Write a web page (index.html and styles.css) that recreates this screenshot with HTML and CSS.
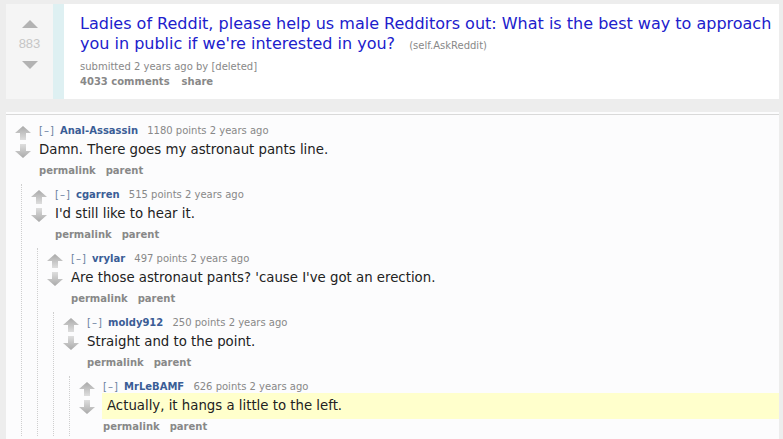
FILE: index.html
```html
<!DOCTYPE html>
<html>

<head>
    <title>AskReddit</title>
    <link rel="stylesheet" href="styles.css">
</head>

<body>
    <div class="link">
        <div class="midcol">
            <div class="arrow up"></div>
            <div class="score">883</div>
            <div class="arrow down"></div>
        </div>
        <div class="thumb"></div>
        <div class="entry">
            <p class="title">
                <a href="#">Ladies of Reddit, please help us male Redditors out: What is the best way to approach you in public if we're interested in you?</a>
                <span class="domain">(self.AskReddit)</span>
            </p>
            <p class="tagline">submitted 2 years ago by [deleted]</p>
            <ul class="flat-list">
                <li>4033 comments</li>
                <li>share</li>
            </ul>
        </div>
    </div>

    <div class="commentarea">
        <div class="sitetable">
            <div class="comment">
                <div class="voters">
                    <svg class="vote" viewBox="0 0 16 14"><use href="#upmod" /></svg>
                    <svg class="vote" viewBox="0 0 16 14"><use href="#downmod" /></svg>
                </div>
                <div class="entry">
                    <p class="tagline"><span class="expand">[&ndash;]</span> <span class="author">Anal-Assassin</span> <span class="points">1180 points 2 years ago</span></p>
                    <div class="md">Damn. There goes my astronaut pants line.</div>
                    <ul class="flat-list"><li>permalink</li><li>parent</li></ul>
                </div>
                <div class="child">
                    <div class="comment">
                        <div class="voters">
                            <svg class="vote" viewBox="0 0 16 14"><use href="#upmod" /></svg>
                            <svg class="vote" viewBox="0 0 16 14"><use href="#downmod" /></svg>
                        </div>
                        <div class="entry">
                            <p class="tagline"><span class="expand">[&ndash;]</span> <span class="author">cgarren</span> <span class="points">515 points 2 years ago</span></p>
                            <div class="md">I'd still like to hear it.</div>
                            <ul class="flat-list"><li>permalink</li><li>parent</li></ul>
                        </div>
                        <div class="child">
                            <div class="comment">
                                <div class="voters">
                                    <svg class="vote" viewBox="0 0 16 14"><use href="#upmod" /></svg>
                                    <svg class="vote" viewBox="0 0 16 14"><use href="#downmod" /></svg>
                                </div>
                                <div class="entry">
                                    <p class="tagline"><span class="expand">[&ndash;]</span> <span class="author">vrylar</span> <span class="points">497 points 2 years ago</span></p>
                                    <div class="md">Are those astronaut pants? 'cause I've got an erection.</div>
                                    <ul class="flat-list"><li>permalink</li><li>parent</li></ul>
                                </div>
                                <div class="child">
                                    <div class="comment">
                                        <div class="voters">
                                            <svg class="vote" viewBox="0 0 16 14"><use href="#upmod" /></svg>
                                            <svg class="vote" viewBox="0 0 16 14"><use href="#downmod" /></svg>
                                        </div>
                                        <div class="entry">
                                            <p class="tagline"><span class="expand">[&ndash;]</span> <span class="author">moldy912</span> <span class="points">250 points 2 years ago</span></p>
                                            <div class="md">Straight and to the point.</div>
                                            <ul class="flat-list"><li>permalink</li><li>parent</li></ul>
                                        </div>
                                        <div class="child">
                                            <div class="comment">
                                                <div class="voters">
                                                    <svg class="vote" viewBox="0 0 16 14"><use href="#upmod" /></svg>
                                                    <svg class="vote" viewBox="0 0 16 14"><use href="#downmod" /></svg>
                                                </div>
                                                <div class="entry">
                                                    <p class="tagline"><span class="expand">[&ndash;]</span> <span class="author">MrLeBAMF</span> <span class="points">626 points 2 years ago</span></p>
                                                    <div class="md highlight">Actually, it hangs a little to the left.</div>
                                                    <ul class="flat-list"><li>permalink</li><li>parent</li></ul>
                                                </div>
                                            </div>
                                        </div>
                                    </div>
                                </div>
                            </div>
                        </div>
                    </div>
                </div>
            </div>
        </div>
    </div>

    <svg class="defs" width="0" height="0">
        <defs>
            <linearGradient id="gup" x1="0" y1="0" x2="0" y2="1">
                <stop offset="0" stop-color="#a9a9a9" />
                <stop offset="1" stop-color="#dedede" />
            </linearGradient>
            <linearGradient id="gdown" x1="0" y1="0" x2="0" y2="1">
                <stop offset="0" stop-color="#dedede" />
                <stop offset="1" stop-color="#a9a9a9" />
            </linearGradient>
            <symbol id="upmod" viewBox="0 0 16 14">
                <polygon points="8,0 16,7 11,7 11,14 5,14 5,7 0,7" fill="url(#gup)" />
            </symbol>
            <symbol id="downmod" viewBox="0 0 16 14">
                <polygon points="5,0 11,0 11,7 16,7 8,14 0,7 5,7" fill="url(#gdown)" />
            </symbol>
        </defs>
    </svg>
</body>

</html>
```

FILE: styles.css
```css
body {
    margin: 0;
    background-color: #ededed;
    font-family: "DejaVu Sans", Verdana, sans-serif;
    color: #222;
    overflow: hidden;
}

p, ul {
    margin: 0;
    padding: 0;
}

.flat-list {
    list-style: none;
    display: flex;
    gap: 10px;
    font-size: 10px;
    line-height: 12px;
    font-weight: bold;
    color: #888;
}

/* post header */

.link {
    display: flex;
    margin: 4px 4px 0 6px;
    height: 95px;
    background-color: #fff;
}

.link .midcol {
    width: 47px;
    background-color: #f5f5f5;
    display: flex;
    flex-direction: column;
    align-items: center;
    padding-top: 16px;
    box-sizing: border-box;
}

.arrow {
    width: 0;
    height: 0;
    border-left: 8px solid transparent;
    border-right: 8px solid transparent;
}

.arrow.up {
    border-bottom: 8px solid #b3b3b3;
}

.arrow.down {
    border-top: 8px solid #b3b3b3;
}

.score {
    font-family: "Liberation Sans", Arial, sans-serif;
    font-size: 13px;
    line-height: 16px;
    color: #c6c6c6;
    margin: 8px 0 9px;
}

.thumb {
    width: 11px;
    background-color: #def0f2;
}

.link .entry {
    flex: 1;
    padding: 10px 0 0 16px;
}

.title {
    font-size: 16px;
    line-height: 20px;
}

.title a {
    color: #2020cc;
    text-decoration: none;
}

.domain {
    display: inline-block;
    font-size: 10px;
    line-height: 12px;
    color: #888;
    margin-left: 9px;
}

.link .tagline {
    font-size: 10px;
    line-height: 12px;
    color: #888;
    margin: 7px 0 3px;
}

.link .flat-list {
    gap: 12px;
}

/* comments */

.commentarea {
    margin: 13px 4px 0 6px;
    padding-top: 2px;
    background-color: #fcfcfd;
    height: 326px;
}

.sitetable {
    border-top: 1px solid #d9d9d9;
    padding: 5px 0 0 9px;
}

.comment {
    display: grid;
    grid-template-columns: 16px 1fr;
    column-gap: 8px;
    padding-top: 5px;
}

.voters {
    display: flex;
    flex-direction: column;
    gap: 4px;
    padding-top: 1px;
}

.vote {
    width: 16px;
    height: 14px;
}

.comment .tagline {
    font-size: 10px;
    line-height: 12px;
    color: #888;
}

.expand {
    color: #6a7fa0;
    letter-spacing: 1px;
    margin-right: 2px;
}

.author {
    font-weight: bold;
    color: #3a5d96;
    margin-right: 6px;
}

.md {
    font-size: 13.3px;
    line-height: 18px;
    padding: 4px 0;
}

.md.highlight {
    background-color: #ffffcc;
    margin-left: -1px;
    padding-left: 5px;
}

.comment .flat-list {
    margin-top: 2px;
}

.child {
    grid-column: 1 / 3;
    margin: 7px 0 0 6px;
    border-left: 1px dotted #cfcfcf;
    padding-left: 9px;
    min-height: 60px;
}
```
